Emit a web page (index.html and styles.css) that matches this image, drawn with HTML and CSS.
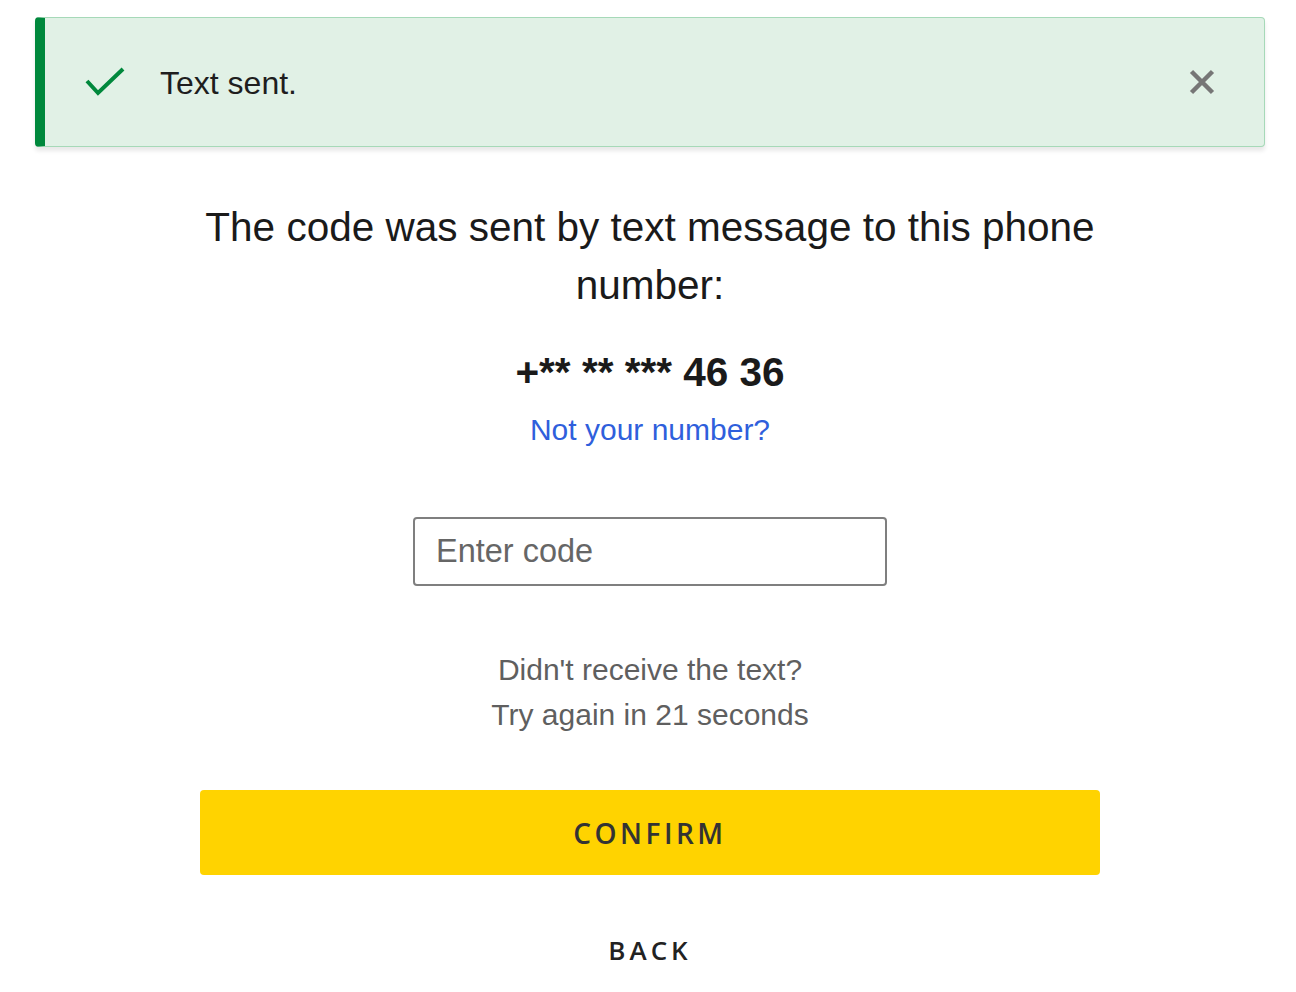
FILE: index.html
```html
<!DOCTYPE html>
<html lang="en">
<head>
<meta charset="utf-8">
<title>Verify phone number</title>
<link rel="stylesheet" href="styles.css">
</head>
<body>
<div class="page">
  <div class="alert" role="status">
    <svg class="alert-icon" width="42" height="32" viewBox="0 0 42 32" aria-hidden="true">
      <path d="M2 14 L13 26 L38 2" fill="none" stroke="#00883c" stroke-width="4"/>
    </svg>
    <span class="alert-text">Text sent.</span>
    <button class="alert-close" type="button" aria-label="Close">
      <svg width="26" height="26" viewBox="0 0 26 26" aria-hidden="true">
        <path d="M2.5 2.5 L23.5 23.5 M23.5 2.5 L2.5 23.5" stroke="#767676" stroke-width="4.5"/>
      </svg>
    </button>
  </div>

  <main class="verify">
    <h1 class="verify-title">The code was sent by text message to this phone number:</h1>
    <p class="verify-phone">+** ** *** 46 36</p>
    <a class="verify-link" href="#">Not your number?</a>

    <input class="code-input" type="text" placeholder="Enter code">

    <p class="resend">Didn't receive the text?<br>Try again in 21 seconds</p>

    <button class="btn btn-primary" type="button">CONFIRM</button>
    <button class="btn btn-plain" type="button">BACK</button>
  </main>
</div>
</body>
</html>
```

FILE: styles.css
```css
* {
  box-sizing: border-box;
}

body {
  margin: 0;
  background: #ffffff;
  font-family: "Liberation Sans", Arial, sans-serif;
  color: #1a1a1a;
}

.page {
  padding: 17px 31px 0 35px;
}

/* success toast */
.alert {
  display: flex;
  align-items: center;
  height: 130px;
  background: #e1f1e6;
  border: 1px solid #a6d9b8;
  border-left: 10px solid #00883c;
  border-radius: 4px;
  box-shadow: 0 4px 4px rgba(0, 0, 0, 0.09);
  padding: 0 49px 0 40px;
}

.alert-icon {
  display: block;
  flex: none;
  margin-top: 1px;
}

.alert-text {
  margin-left: 33px;
  font-size: 32px;
  color: #1e1e1e;
  padding-top: 2px;
}

.alert-close {
  margin-left: auto;
  border: 0;
  background: none;
  padding: 0;
  display: flex;
  cursor: pointer;
}

/* verification form */
.verify {
  display: flex;
  flex-direction: column;
  align-items: center;
  text-align: center;
  max-width: 900px;
  margin: 0 auto;
  padding-top: 51px;
}

.verify-title {
  margin: 0;
  font-size: 40.5px;
  font-weight: 400;
  line-height: 58px;
  color: #1a1a1a;
}

.verify-phone {
  margin: 34px 0 0;
  font-size: 40.5px;
  font-weight: 700;
  line-height: 48px;
  color: #1a1a1a;
}

.verify-link {
  margin-top: 16px;
  font-size: 30px;
  line-height: 36px;
  color: #2f5fdc;
  text-decoration: none;
}

.code-input {
  margin-top: 69px;
  width: 474px;
  height: 69px;
  border: 2px solid #7f7f7f;
  border-radius: 4px;
  padding: 0 21px;
  font-family: "Liberation Sans", Arial, sans-serif;
  font-size: 32.5px;
  color: #1a1a1a;
  outline: none;
}

.code-input::placeholder {
  color: #666666;
}

.resend {
  margin: 61px 0 0;
  font-size: 30px;
  line-height: 45px;
  color: #5f5f5f;
}

.btn {
  border: 0;
  font-family: "Open Sans", sans-serif;
  font-weight: 600;
  cursor: pointer;
}

.btn-primary {
  margin-top: 53px;
  width: 900px;
  height: 85px;
  background: #ffd300;
  color: #333333;
  border-radius: 4px;
  font-size: 28px;
  letter-spacing: 3.5px;
}

.btn-plain {
  margin-top: 57px;
  background: none;
  color: #222222;
  font-size: 26px;
  letter-spacing: 4px;
  line-height: 36px;
  padding: 0;
}
```
